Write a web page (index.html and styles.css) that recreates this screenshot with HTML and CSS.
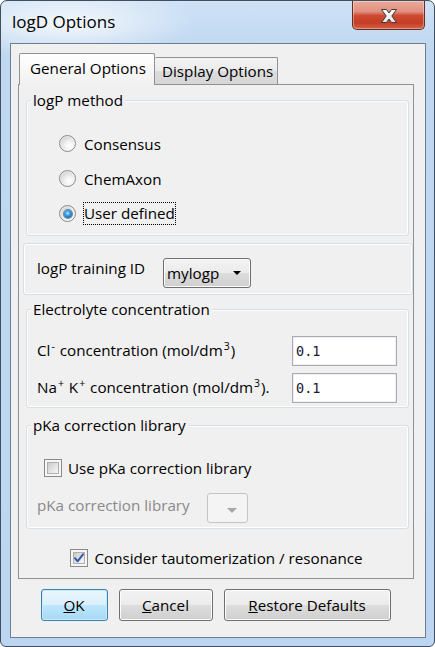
FILE: index.html
```html
<!DOCTYPE html>
<html lang="en">
<head>
<meta charset="utf-8">
<title>logD Options</title>
<link rel="stylesheet" href="styles.css">
</head>
<body>
<div class="window">
  <div class="titlebar">
    <span class="title">logD Options</span>
    <div class="close">
      <svg width="20" height="16" viewBox="0 0 20 16">
        <defs>
          <linearGradient id="xg" x1="0" y1="0" x2="0" y2="1">
            <stop offset="0" stop-color="#ffffff"/>
            <stop offset="1" stop-color="#e4e4e4"/>
          </linearGradient>
        </defs>
        <path d="M2.5 1.5H7.5L10 5L12.5 1.5H17.5L12.8 8L17.5 14.5H12.5L10 11L7.5 14.5H2.5L7.2 8Z" fill="url(#xg)" stroke="#3b3b3b" stroke-width="1" stroke-linejoin="round"/>
      </svg>
    </div>
  </div>
  <div class="client">
    <div class="tabbar">
      <div class="tab tab-active">General Options</div>
      <div class="tab tab-inactive">Display Options</div>
    </div>
    <div class="pane">
      <fieldset class="group group-method">
        <legend>logP method</legend>
        <div class="radio-row"><span class="radio"></span><span class="lbl">Consensus</span></div>
        <div class="radio-row"><span class="radio"></span><span class="lbl">ChemAxon</span></div>
        <div class="radio-row"><span class="radio radio-on"></span><span class="lbl focus">User defined</span></div>
      </fieldset>

      <div class="plain-group">
        <span class="train-label">logP training ID</span>
        <div class="combo">
          <span>mylogp</span>
          <span class="arrow"></span>
        </div>
      </div>

      <fieldset class="group group-elec">
        <legend>Electrolyte concentration</legend>
        <div class="field-row">
          <span class="field-label">Cl<span class="sup">-</span> concentration (mol/dm<span class="sup">3</span>)</span>
          <div class="input">0.1</div>
        </div>
        <div class="field-row second">
          <span class="field-label">Na<span class="sup">+</span> K<span class="sup">+</span> concentration (mol/dm<span class="sup">3</span>).</span>
          <div class="input">0.1</div>
        </div>
      </fieldset>

      <fieldset class="group group-pka">
        <legend>pKa correction library</legend>
        <div class="check-row">
          <span class="check"></span><span class="lbl">Use pKa correction library</span>
        </div>
        <div class="lib-row">
          <span class="lib-label">pKa correction library</span>
          <div class="combo combo-disabled"><span class="arrow"></span></div>
        </div>
      </fieldset>

      <div class="consider-row">
        <span class="check check-on">
          <svg width="12" height="12" viewBox="0 0 12 12"><path d="M2 6.2L4.6 9.3L10 2.3" fill="none" stroke="#3558a6" stroke-width="2" stroke-linecap="round" stroke-linejoin="round"/></svg>
        </span>
        <span class="lbl">Consider tautomerization / resonance</span>
      </div>
    </div>

    <div class="buttons">
      <div class="btn btn-default btn-ok"><u>O</u>K</div>
      <div class="btn btn-cancel"><u>C</u>ancel</div>
      <div class="btn btn-restore"><u>R</u>estore Defaults</div>
    </div>
  </div>
</div>
</body>
</html>
```

FILE: styles.css
```css
* { box-sizing: border-box; }
html, body { margin: 0; padding: 0; }
body {
  width: 435px;
  height: 647px;
  overflow: hidden;
  background: #ffffff;
  font-family: "Open Sans", "Noto Sans", sans-serif;
  font-size: 15.2px;
  color: #000;
}

.window {
  width: 435px;
  height: 647px;
  border: 1px solid #404e5e;
  border-radius: 7px 7px 6px 6px;
  background:
    radial-gradient(ellipse 130px 36px at 66px 22px, rgba(255,255,255,0.8), rgba(255,255,255,0) 100%),
    linear-gradient(#cfe2f6 0, #c0d8f1 44px, #bcd6f1 100%);
  padding: 0 8px 8px 9px;
  display: flex;
  flex-direction: column;
  overflow: hidden;
}

.titlebar {
  height: 42px;
  display: flex;
  justify-content: space-between;
  align-items: flex-start;
  flex: none;
}
.title {
  font-size: 17px;
  line-height: 22px;
  padding: 10px 0 0 2px;
}
.close {
  width: 73px;
  height: 29px;
  margin-right: 1px;
  border: 1px solid #6b2a20;
  border-top: none;
  border-radius: 0 0 5px 5px;
  background: linear-gradient(#eaa99c 0%, #e1907f 38%, #cd4b33 52%, #c53d24 78%, #d36448 100%);
  box-shadow: inset 0 0 0 1px rgba(255,255,255,0.35);
  display: flex;
  align-items: center;
  justify-content: center;
  padding-top: 1px;
}

.client {
  height: 595px;
  border: 1px solid #6f7d8c;
  background: #f0f0f0;
  padding: 9px 11px 0 7px;
  display: flex;
  flex-direction: column;
  flex: none;
}

.tabbar {
  height: 31px;
  display: flex;
  align-items: flex-end;
  padding-left: 1px;
  flex: none;
}
.tab {
  border: 1px solid #8e9196;
  border-bottom: none;
  border-radius: 2px 2px 0 0;
  white-space: nowrap;
}
.tab-active {
  width: 136px;
  height: 32px;
  margin-bottom: -1px;
  position: relative;
  z-index: 1;
  background: linear-gradient(#ffffff, #f6f6f6 60%, #f0f0f0);
  padding: 4px 0 0 10px;
  line-height: 20px;
}
.tab-inactive {
  width: 123px;
  height: 27px;
  border-left: none;
  background: linear-gradient(#f3f3f3 0%, #ebebeb 50%, #dddddd 51%, #d6d6d6 100%);
  padding: 3px 0 0 7px;
  line-height: 20px;
}

.pane {
  width: 396px;
  height: 495px;
  border: 1px solid #8e9196;
  background: #f0f0f0;
  display: flex;
  flex-direction: column;
  flex: none;
}

.group {
  border: 1px solid #d5dfe5;
  border-radius: 3px;
  box-shadow: inset 0 0 0 1px #ffffff;
  min-width: 0;
  padding: 0;
  margin: 0;
}
.group legend {
  line-height: 17px;
  height: 17px;
  padding: 0 2px;
  margin-left: 4px;
  background: #f0f0f0;
  white-space: nowrap;
}

.group-method {
  margin: 7px 4px 0 7px;
  padding: 17px 0 4px 0;
}
.radio-row {
  height: 35px;
  display: flex;
  align-items: center;
  padding-left: 32px;
}
.radio {
  width: 17px;
  height: 17px;
  flex: none;
  border-radius: 50%;
  border: 1px solid #8a8a8a;
  background: radial-gradient(circle at 62% 66%, #ffffff 0, #f0f0f0 35%, #d4d4d4 70%, #bdbdbd 100%);
  box-shadow: inset 0 0 0 1px rgba(255,255,255,0.6);
  display: grid;
  place-items: center;
  margin-right: 8px;
}
.radio-on::after {
  content: "";
  width: 8px;
  height: 8px;
  border-radius: 50%;
  background: radial-gradient(circle at 45% 40%, #b4e6ff 0, #3a9ee0 38%, #15629f 78%, #0c3d6e 100%);
  box-shadow: 0 0 0 1px #5f87ab;
}
.lbl { line-height: 20px; white-space: nowrap; }
.focus {
  outline: 1px dotted #000;
  outline-offset: 0;
  padding: 0 0 1px 0;
  line-height: 20px;
}

.plain-group {
  margin: 7px 0 0 4px;
  width: 390px;
  height: 52px;
  border: 1px solid #d5dfe5;
  border-radius: 3px;
  box-shadow: inset 0 0 0 1px #ffffff;
  padding: 14px 0 0 13px;
  display: flex;
  align-items: flex-start;
  flex: none;
}
.train-label {
  width: 126px;
  line-height: 20px;
  white-space: nowrap;
}

.combo {
  width: 88px;
  height: 30px;
  border: 1px solid #707070;
  border-radius: 3px;
  background: linear-gradient(#f2f2f2 0%, #ebebeb 50%, #dddddd 51%, #cfcfcf 100%);
  box-shadow: inset 0 0 0 1px #fbfbfb;
  display: flex;
  align-items: center;
  justify-content: space-between;
  padding: 0 9px 0 3px;
  line-height: 20px;
}
.arrow {
  width: 0;
  height: 0;
  border-left: 4px solid transparent;
  border-right: 4px solid transparent;
  border-top: 4px solid #000;
}
.combo-disabled {
  width: 41px;
  border-color: #c2c4c7;
  background: #f4f4f4;
  box-shadow: none;
  justify-content: flex-end;
  padding: 4px 10px 0 0;
}
.combo-disabled .arrow {
  border-left-width: 5px;
  border-right-width: 5px;
  border-top: 5px solid #a8a8a8;
}

.group-elec {
  margin: 6px 4px 0 7px;
  padding: 18px 0 4px 0;
}
.field-row {
  display: flex;
  align-items: center;
  height: 30px;
  padding-left: 10px;
}
.field-row.second { margin-top: 7px; }
.field-label {
  width: 255px;
  white-space: nowrap;
  line-height: 20px;
}
.sup {
  font-size: 10.5px;
  position: relative;
  top: -6px;
  margin: 0 1px;
}
.input {
  width: 105px;
  height: 30px;
  border: 1px solid #a9abb3;
  box-shadow: inset 0 0 0 1px #eef0f3;
  background: #fff;
  font-family: "DejaVu Sans Mono", "Liberation Mono", monospace;
  font-size: 13.5px;
  line-height: 28px;
  padding-left: 3px;
  color: #1c1733;
}

.group-pka {
  margin: 9px 4px 0 7px;
  padding: 24px 0 5px 0;
}
.check-row {
  height: 20px;
  display: flex;
  align-items: center;
  margin-left: 17px;
}
.check {
  width: 18px;
  height: 18px;
  flex: none;
  border: 1px solid #8a8a8a;
  background: #f6f6f6;
  padding: 2px;
  display: grid;
  margin-right: 6px;
}
.check::before {
  content: "";
  grid-area: 1 / 1;
  border: 1px solid #b0b0b0;
  background: linear-gradient(135deg, #c9c9c9 0%, #e2e2e2 50%, #f7f7f7 100%);
}
.check svg {
  grid-area: 1 / 1;
  align-self: center;
  justify-self: center;
}
.lib-row {
  margin-top: 15px;
  display: flex;
  align-items: flex-start;
  padding-left: 10px;
}
.lib-label {
  width: 170px;
  padding-top: 2px;
  line-height: 20px;
  color: #8a8a8a;
  white-space: nowrap;
}

.consider-row {
  margin-top: 19px;
  height: 20px;
  display: flex;
  align-items: center;
  justify-content: center;
  padding-left: 1px;
}

.buttons {
  margin-top: 10px;
  display: flex;
  justify-content: center;
  gap: 11px;
  padding-right: 1px;
}
.btn {
  height: 32px;
  border: 1px solid #707070;
  border-radius: 3px;
  background: linear-gradient(#f2f2f2 0%, #ebebeb 50%, #dddddd 51%, #cfcfcf 100%);
  box-shadow: inset 0 0 0 1px #fcfcfc;
  display: flex;
  align-items: center;
  justify-content: center;
  line-height: 20px;
}
.btn-default {
  border-color: #3c7fb1;
  background: linear-gradient(#eaf6fd 0%, #d9f0fc 50%, #bee6fd 51%, #a7d9f5 100%);
  box-shadow: inset 0 0 0 1px #c8ecfc;
}
.btn-ok { width: 67px; }
.btn-cancel { width: 94px; }
.btn-restore { width: 167px; }
```
